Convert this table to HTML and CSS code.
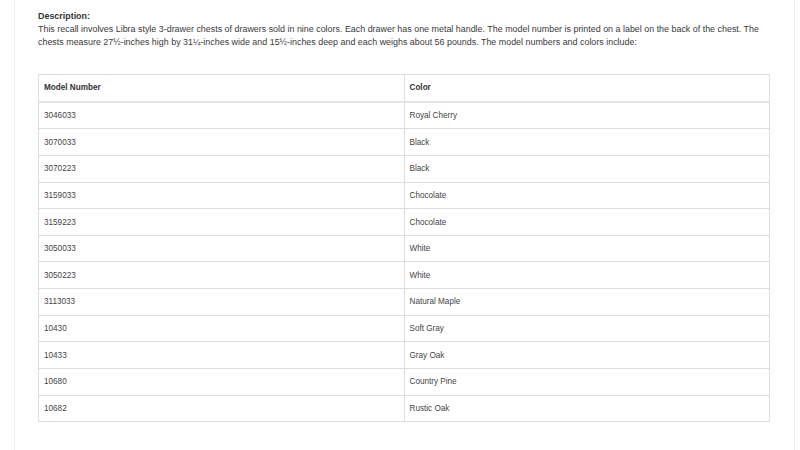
FILE: index.html
```html
<!DOCTYPE html>
<html>
<head>
<meta charset="utf-8">
<link rel="stylesheet" href="styles.css">
</head>
<body>
<div class="panel">
  <div class="desc">
    <strong class="desc-title">Description:</strong>
    <p class="desc-text">This recall involves Libra style 3-drawer chests of drawers sold in nine colors. Each drawer has one metal handle. The model number is printed on a label on the back of the chest. The chests measure 27½-inches high by 31¼-inches wide and 15½-inches deep and each weighs about 56 pounds. The model numbers and colors include:</p>
  </div>
  <table class="models">
    <thead>
      <tr><th>Model Number</th><th>Color</th></tr>
    </thead>
    <tbody>
      <tr><td>3046033</td><td>Royal Cherry</td></tr>
      <tr><td>3070033</td><td>Black</td></tr>
      <tr><td>3070223</td><td>Black</td></tr>
      <tr><td>3159033</td><td>Chocolate</td></tr>
      <tr><td>3159223</td><td>Chocolate</td></tr>
      <tr><td>3050033</td><td>White</td></tr>
      <tr><td>3050223</td><td>White</td></tr>
      <tr><td>3113033</td><td>Natural Maple</td></tr>
      <tr><td>10430</td><td>Soft Gray</td></tr>
      <tr><td>10433</td><td>Gray Oak</td></tr>
      <tr><td>10680</td><td>Country Pine</td></tr>
      <tr><td>10682</td><td>Rustic Oak</td></tr>
    </tbody>
  </table>
</div>
</body>
</html>
```
FILE: styles.css
```css
html, body {
  margin: 0;
  padding: 0;
  background: #fff;
}
body {
  font-family: "Liberation Sans", Arial, sans-serif;
  color: #333;
}
.panel {
  margin: 0 5px 0 14px;
  border-left: 1px solid #efefef;
  border-right: 1px solid #efefef;
  padding: 10px 24px 30px 23px;
  min-height: 420px;
}
.desc {
  font-size: 8.92px;
  line-height: 13px;
  color: #3a3a3a;
}
.desc-title {
  display: block;
  font-weight: bold;
  color: #333;
}
.desc-text {
  margin: 0;
}
.models {
  margin-top: 25px;
  width: 100%;
  border-collapse: collapse;
  table-layout: fixed;
  border: 1px solid #ddd;
  font-size: 8.16px;
}
.models th, .models td {
  border: 1px solid #ddd;
  text-align: left;
  padding: 0 5px;
  height: 25.65px;
  vertical-align: middle;
}
.models th {
  font-weight: bold;
  color: #333;
  border-bottom: 2px solid #e3e3e3;
}
.models td {
  color: #444;
}
```
